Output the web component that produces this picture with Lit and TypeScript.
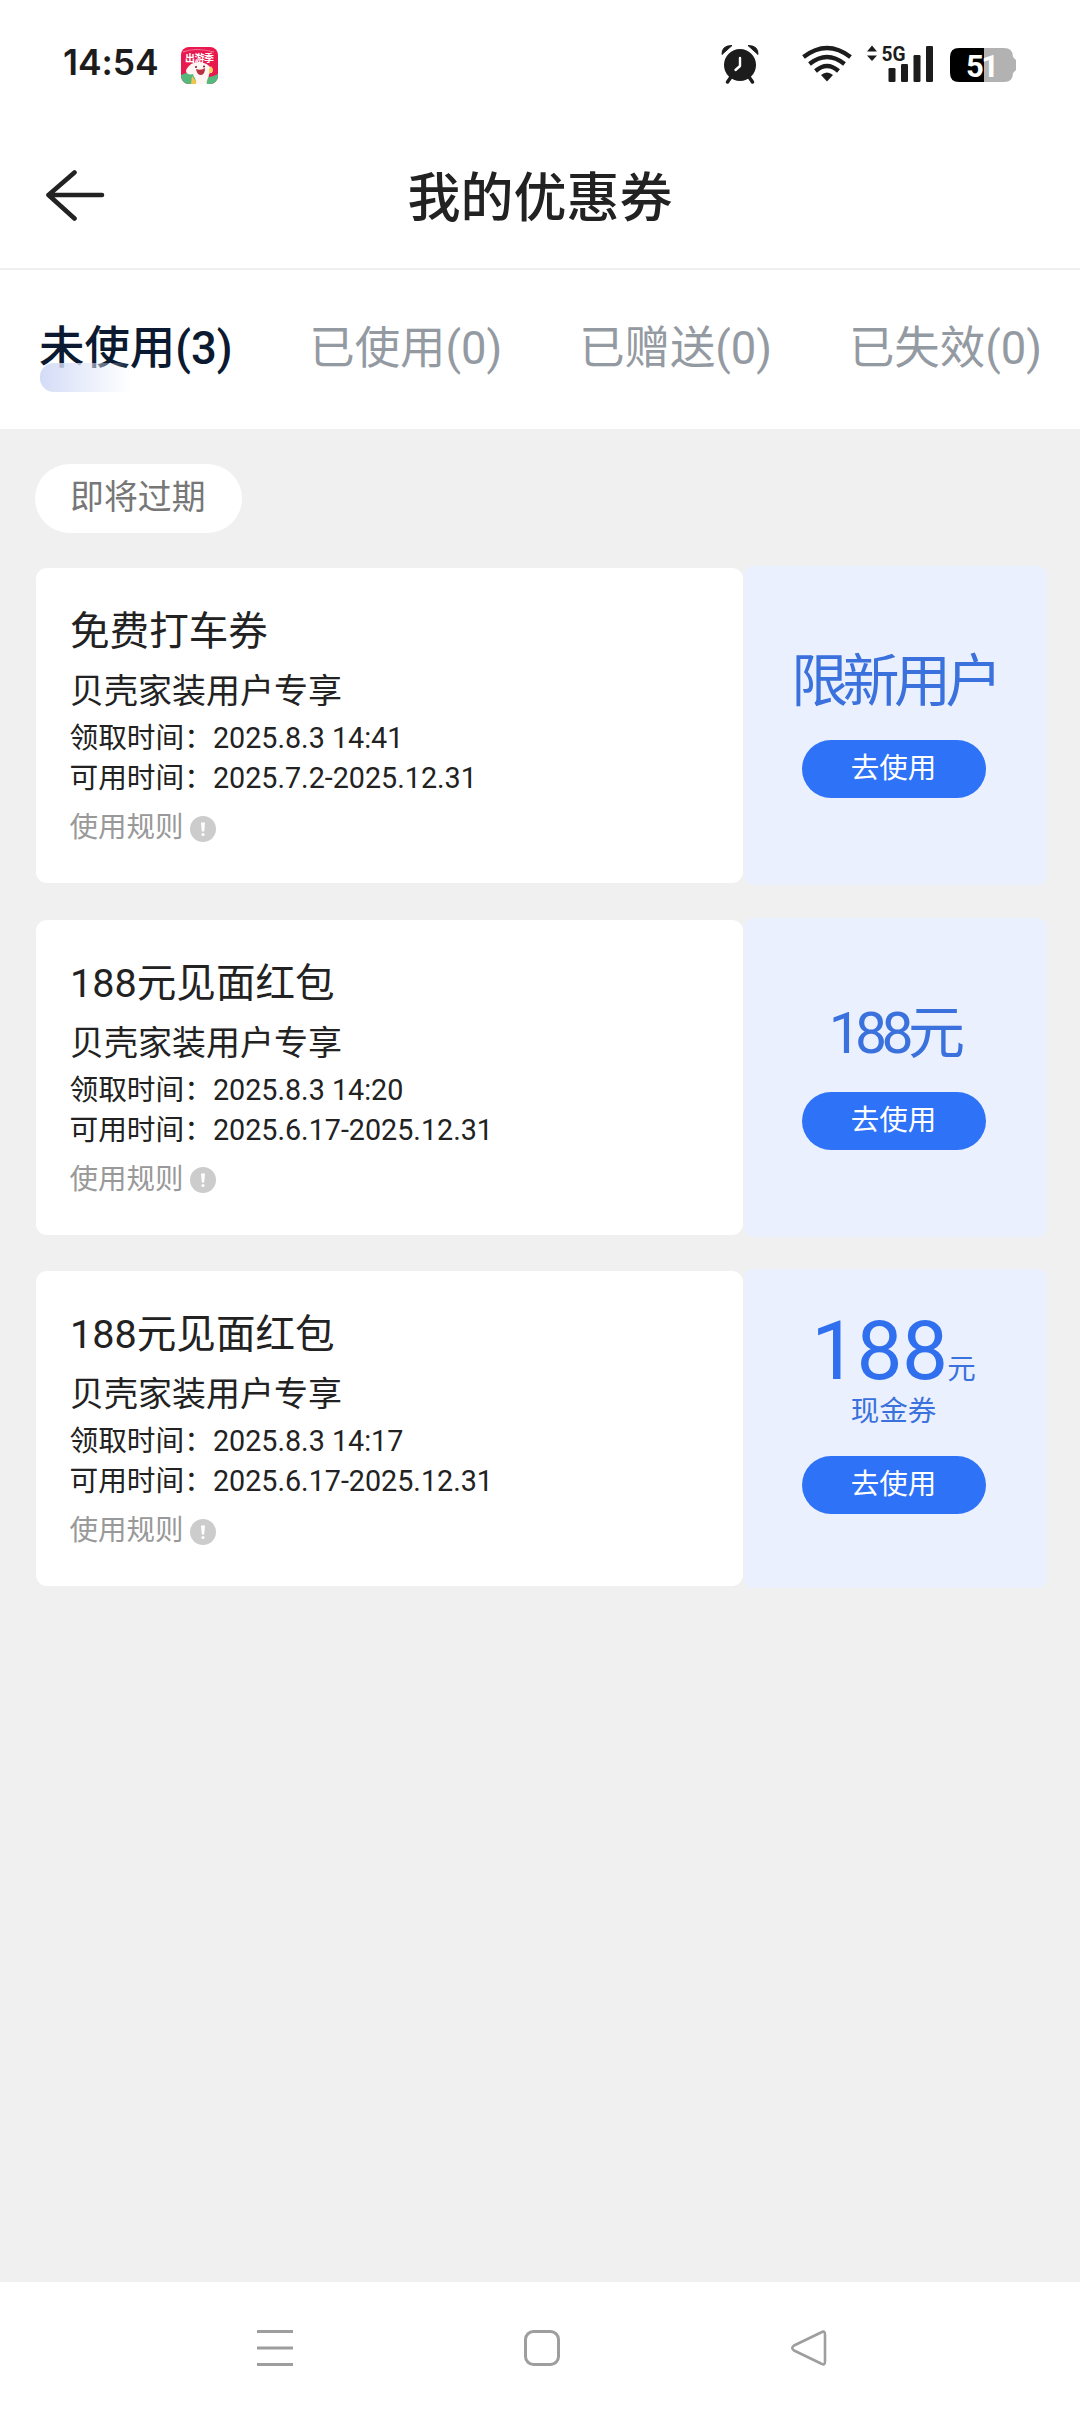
import { LitElement, html, css } from "lit";
import { customElement, property } from "lit/decorators.js";

interface Coupon {
  title: string;
  received: string;
  valid: string;
  value: string;
  cash?: boolean;
}

const COUPONS: Coupon[] = [
  { title: "免费打车券", received: "2025.8.3 14:41", valid: "2025.7.2-2025.12.31", value: "限新用户" },
  { title: "188元见面红包", received: "2025.8.3 14:20", valid: "2025.6.17-2025.12.31", value: "188元" },
  { title: "188元见面红包", received: "2025.8.3 14:17", valid: "2025.6.17-2025.12.31", value: "188", cash: true },
];

const TABS = ["未使用(3)", "已使用(0)", "已赠送(0)", "已失效(0)"];

@customElement("status-bar")
class StatusBar extends LitElement {
  static styles = css`
    :host { display: flex; align-items: center; height: 130px; padding: 0 64px 0 63px; box-sizing: border-box; }
    .time { font: 600 35.500px/40px Inter, Roboto, sans-serif; letter-spacing: -0.1px; color: #1c1c1c; width: 118px; white-space: nowrap; margin-top: -5px; }
    .badge { width: 37px; height: 37px; display: block; }
    .icons { display: block; margin-left: auto; width: 296px; height: 60px; }
    .net { font: 700 20px Roboto, sans-serif; }
    .pct { font: 700 31px Roboto, sans-serif; }
    .tiny { font: 700 10px "Noto Sans CJK SC", sans-serif; }
  `;
  render() {
    return html`
      <span class="time">14:54</span>
      <svg class="badge" viewBox="0 0 37 37">
        <defs><clipPath id="r"><rect width="37" height="37" rx="8" /></clipPath></defs>
        <g clip-path="url(#r)">
          <rect width="37" height="37" fill="#e8194f" />
          <path d="M0 28Q9 23 17 28T37 27V37H0Z" fill="#55b87c" />
          <path d="M11 29l6 8h-7Z" fill="#f3c54a" />
          <path d="M2 5Q14 0 33 5" stroke="#f27aa0" stroke-width="1.2" fill="none" />
          <path d="M9 18C13 14 25 14 29 20l3 4-4 3c0 4-3 6-2 10H15c1-4-2-6-3-10-3 1-7 0-7-3 0-2 2-4 4-6Z" fill="#fff5f3" />
          <path d="M15 22q5 2 9-1 0 7-4 7t-5-6Z" fill="#b83242" />
          <circle cx="15" cy="20" r="1" fill="#5d2530" /><circle cx="23" cy="19.5" r="1" fill="#5d2530" />
          <path d="M28 22l2-3 2 3-1 4h-3Z" fill="#f6d463" />
          <text class="tiny" x="4" y="14.5" fill="#fff" textLength="29">出游季</text>
        </g>
      </svg>
      <svg class="icons" viewBox="720 35 296 60">
        <g fill="#1c1c1c">
          <circle cx="740" cy="65" r="16" />
          <path d="M722 54.500Q721.500 45.500 732 45.500Z M758 54.500Q758.500 45.500 748 45.500Z" stroke="#1c1c1c" stroke-width="1" />
          <path d="M731 77l-3.500 5M749 77l3.500 5" stroke="#1c1c1c" stroke-width="3.500" stroke-linecap="round" />
          <path d="M740 58v8l-4.500 4" stroke="#fff" stroke-width="2.400" fill="none" stroke-linecap="round" stroke-linejoin="round" />
          <g fill="none" stroke="#1c1c1c" stroke-width="4.400">
            <path d="M803.500 57Q827 39 850.500 57" />
            <path d="M809.500 64Q827 50 844.500 64" />
            <path d="M815.500 71Q827 61 838.500 71" />
          </g>
          <path d="M821 75Q827 70 833 75L827 81.500Z" />
          <path d="M867 51.500l5-6 5 6ZM867 55.500h10l-5 5.500Z" />
          <text class="net" x="881.500" y="60.500" textLength="24" lengthAdjust="spacingAndGlyphs">5G</text>
          <rect x="888.500" y="68" width="7" height="14" rx="1.300" />
          <rect x="901" y="64" width="7" height="18" rx="1.300" />
          <rect x="913.500" y="55" width="7" height="27" rx="1.300" />
          <rect x="926" y="46" width="7" height="36" rx="1.300" />
        </g>
        <path d="M984 48h20q9 0 9 9l3 3v10l-3 3q0 9-9 9h-20Z" fill="#b2b2b2" />
        <path d="M984 48h-25q-9 0-9 9v16q0 9 9 9h25Z" fill="#000" />
        <text class="pct" x="966" y="77" fill="#fff" textLength="33">51</text>
      </svg>
    `;
  }
}

@customElement("coupon-card")
class CouponCard extends LitElement {
  @property({ attribute: false }) coupon!: Coupon;
  static styles = css`
    :host { display: flex; height: 315px; font-family: Roboto, "Noto Sans CJK SC", sans-serif; color: #222; }
    .info { box-sizing: border-box; flex: none; width: 706.500px; background: #fff; border-radius: 11px; padding: 40px 34px 0; white-space: nowrap; }
    .title { font-size: 39.600px; line-height: 48px; }
    .sub { font-size: 34px; line-height: 42px; margin-top: 14px; }
    .row { font-size: 28.700px; line-height: 40px; }
    .first { margin-top: 6px; }
    .rule { display: flex; align-items: center; gap: 6px; font-size: 28.500px; line-height: 40px; color: #999; margin-top: 10px; }
    .rule svg { width: 26px; height: 26px; margin-top: 1px; }
    .row, .rule { margin-left: -0.500px; }
    .side { flex: none; width: 303px; margin: -2px 0 -2px 1px; background: #eaf0fe; border-radius: 9px;
      display: flex; flex-direction: column; align-items: center; box-sizing: border-box; padding-top: 83px; color: #3a71dc; }
    .value { font-size: 57px; line-height: 66px; letter-spacing: -5.600px; white-space: nowrap; margin-right: 2px; }
    .side.cash { padding-top: 40px; }
    .big { display: flex; align-items: baseline; white-space: nowrap; margin-right: 3px; }
    .num { font-size: 82px; line-height: 84px; letter-spacing: -0.700px; color: #3070ee; }
    .unit, .kind { font-size: 28.500px; }
    .kind { line-height: 36px; padding: 1px 3px 0 0; }
    .go { display: block; width: 184px; height: 58px; border: 0; border-radius: 29px; background: #2e72f8; color: #fff; padding: 0;
      font: 28.500px/56px Roboto, "Noto Sans CJK SC", sans-serif; margin: 25px 3px 0 0; }
    .cash .go { margin-top: 26px; }
  `;
  render() {
    const c = this.coupon;
    return html`
      <div class="info">
        <div class="title">${c.title}</div>
        <div class="sub">贝壳家装用户专享</div>
        <div class="row first">领取时间：${c.received}</div>
        <div class="row">可用时间：${c.valid}</div>
        <div class="rule">使用规则
          <svg viewBox="0 0 26 26"><circle cx="13" cy="13" r="13" fill="#ccc" />
            <path d="M11 6.500h4l-.8 9h-2.400Z" fill="#fff" /><circle cx="13" cy="18.500" r="1.600" fill="#fff" /></svg>
        </div>
      </div>
      <div class="side ${c.cash ? "cash" : ""}">
        ${c.cash
          ? html`<div class="big"><span class="num">${c.value}</span><span class="unit">元</span></div><div class="kind">现金券</div>`
          : html`<div class="value">${c.value}</div>`}
        <button class="go">去使用</button>
      </div>
    `;
  }
}

@customElement("app-root")
class AppRoot extends LitElement {
  static styles = css`
    :host { display: flex; flex-direction: column; height: 2414px; background: #f0f0f0; font-family: Roboto, "Noto Sans CJK SC", sans-serif; }
    .head { height: 138px; background: #fff; border-bottom: 2px solid #efefef; display: grid; grid-template-columns: 120px 1fr 120px; align-items: center; }
    .head svg { width: 60px; height: 52px; margin-left: 45px; display: block; margin-top: -8px; }
    .head h1 { margin: 0; text-align: center; font-size: 53px; line-height: 70px; font-weight: 500; color: #222; }
    .top { background: #fff; flex: none; }
    .tabs { height: 159px; display: flex; justify-content: space-between; box-sizing: border-box; padding: 46px 38px 0 39px; }
    .tab { position: relative; font-size: 45.400px; line-height: 66px; color: #949aa2; white-space: nowrap; }
    .tab.on { color: #0b1a30; font-weight: 500; }
    .tab.on::after { content: ""; position: absolute; left: 1px; top: 47px; width: 92px; height: 29px; border-radius: 14px 0 0 14px;
      background: linear-gradient(90deg, rgba(205, 215, 246, .88), rgba(225, 231, 250, .75) 45%, rgba(255, 255, 255, 0)); }
    .body { flex: 1; padding: 35px 33px 0 36px; }
    .chip { display: inline-block; vertical-align: top; height: 69px; line-height: 68px; padding: 0 36px 0 35px; border-radius: 35px; background: #fff; font-size: 33.900px; color: #777; margin-left: -1px; }
    .list { display: flex; flex-direction: column; gap: 36.500px; margin-top: 35px; }
    .nav { height: 132px; background: #fff; display: flex; padding: 46px 251px 0 255px; box-sizing: border-box; justify-content: space-between; }
    .nav svg { width: 40px; height: 40px; }
  `;
  render() {
    return html`
      <div class="top">
        <status-bar></status-bar>
        <div class="head">
          <svg viewBox="0 0 60 52" fill="none" stroke="#222" stroke-width="4.600" stroke-linecap="round" stroke-linejoin="round"><path d="M29.500 3.500L3.500 26L29.500 49.500M3.500 26H57" /></svg>
          <h1>我的优惠券</h1>
          <span></span>
        </div>
        <div class="tabs">${TABS.map((t, i) => html`<div class="tab ${i === 0 ? "on" : ""}">${t}</div>`)}</div>
      </div>
      <div class="body">
        <span class="chip">即将过期</span>
        <div class="list">${COUPONS.map((c) => html`<coupon-card .coupon=${c}></coupon-card>`)}</div>
      </div>
      <div class="nav">
        <svg viewBox="0 0 40 40" stroke="#9e9e9e" stroke-width="3"><path d="M2 3.500h36M2 20h36M2 36.500h36" /></svg>
        <svg viewBox="0 0 40 40" fill="none" stroke="#9e9e9e" stroke-width="3"><rect x="3.500" y="3.500" width="33" height="33" rx="8" /></svg>
        <svg viewBox="0 0 40 40" fill="none" stroke="#9e9e9e" stroke-width="2.600" stroke-linejoin="round"><path d="M36 6.500V33.500Q36 38 32 35.500L5 22.500Q1.500 20 5 17.500L32 4.500Q36 2 36 6.500Z" /></svg>
      </div>
    `;
  }
}
